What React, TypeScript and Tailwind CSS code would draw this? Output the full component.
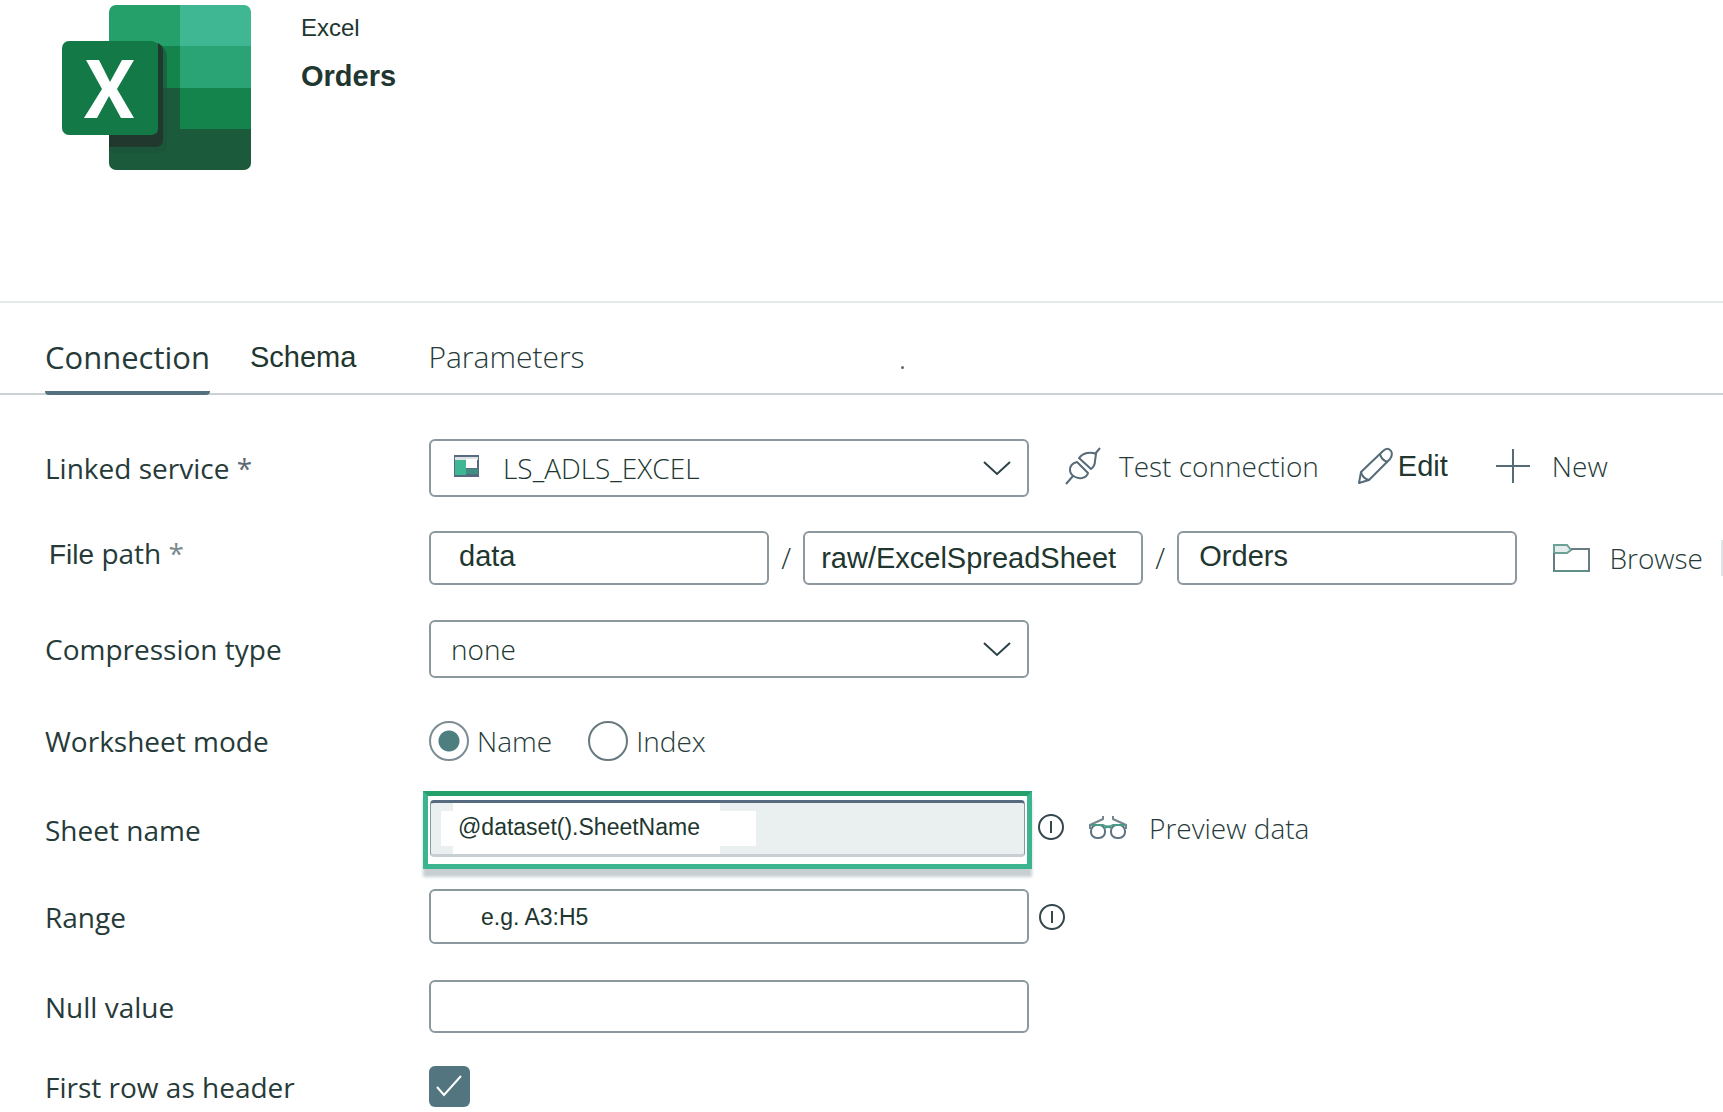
import type { ReactNode } from "react";

const arial = "font-['Liberation_Sans',sans-serif]";
const box = "w-full rounded-md border-2 border-[#8b989d] bg-white text-[#20362f] outline-none";

function ExcelLogo() {
  return (
    <svg width="190" height="166" viewBox="0 0 190 166" aria-label="Excel" role="img">
      <defs>
        <clipPath id="sheet">
          <rect x="47" y="0" width="142" height="165" rx="7" />
        </clipPath>
      </defs>
      <g clipPath="url(#sheet)">
        <rect x="47" y="0" width="71" height="42" fill="#25a06b" />
        <rect x="118" y="0" width="72" height="42" fill="#3fb793" />
        <rect x="47" y="41" width="71" height="42" fill="#14834c" />
        <rect x="118" y="41" width="72" height="42" fill="#2aa474" />
        <rect x="47" y="83" width="71" height="42" fill="#1c5a3c" />
        <rect x="118" y="83" width="72" height="42" fill="#14834c" />
        <rect x="47" y="124" width="143" height="42" fill="#1c5a3c" />
        <path d="M92 37q13 3 13 17v82q0 12-10 12H47v-4z" fill="#1b5138" opacity="0.6" />
        <path d="M47 129h46q3 0 3-6V38q5 3 5 8v88q0 8-8 8H47z" fill="#21382f" />
      </g>
      <rect x="0" y="36" width="96" height="94" rx="7" fill="#137a47" />
      <path d="M24 55h13l11 22 12-22h12L55 84l17 29H59L47 91 35 113H22l18-29z" fill="#fff" />
    </svg>
  );
}

function Chevron() {
  return (
    <svg className="pointer-events-none absolute right-[18px] top-1/2 -translate-y-1/2" width="28" height="16" viewBox="0 0 28 16" fill="none" stroke="#2b4046" strokeWidth="2">
      <path d="M1 2l13 12L27 2" />
    </svg>
  );
}

function PlugIcon() {
  return (
    <svg width="36" height="38" viewBox="0 0 36 38" fill="none" stroke="#566b78" strokeWidth="2" strokeLinejoin="round">
      <path d="M1 37l7-8M30 7l5-6" />
      <path d="M12 15l11 11q-1 4-6 5c-6 1-12-3-12-8 0-4 3-7 7-8z" />
      <path d="M14 11l12 11q4-3 4-8l1-7q-4-2-9-1-5 1-8 5z" />
    </svg>
  );
}

function PencilIcon() {
  return (
    <svg width="36" height="38" viewBox="0 0 36 38" fill="none" stroke="#566b78" strokeWidth="2" strokeLinejoin="round">
      <path d="M2 36l2-11L26 4c3-3 6-3 8 0s1 5-1 8L12 33z" />
      <path d="M23 7c1 5 4 7 8 8M4 25c1 5 4 7 8 8" />
    </svg>
  );
}

function PlusIcon() {
  return (
    <svg width="34" height="36" viewBox="0 0 34 36" fill="none" stroke="#566b78" strokeWidth="2">
      <path d="M17 1v34M0 18h34" />
    </svg>
  );
}

function FolderIcon() {
  return (
    <svg width="38" height="30" viewBox="0 0 38 30" fill="none" strokeWidth="2">
      <path d="M1 2h13l4 5-4 3H1z" fill="#e6ecec" stroke="#6aa296" />
      <path d="M1 10v18h35V6H18" stroke="#6a7c83" />
      <path d="M1 28h35" stroke="#5f8d88" />
    </svg>
  );
}

function GlassesIcon() {
  return (
    <svg width="38" height="24" viewBox="0 0 38 24" fill="none" stroke="#5f7384" strokeWidth="2">
      <rect x="2" y="9" width="14" height="13" rx="6" />
      <rect x="22" y="9" width="14" height="13" rx="6" />
      <path d="M1 13V9l13-6V0M37 13V9L24 3V0" stroke="#75868c" />
      <path d="M2 9h12q5 3 10 0h12M15 12q4-2 8 0" stroke="#4a9b86" />
    </svg>
  );
}

function InfoButton({ label }: { label: string }) {
  return (
    <button type="button" aria-label={label} className="ml-[9px] shrink-0">
      <svg width="28" height="28" viewBox="0 0 28 28" fill="none" stroke="#33474d" strokeWidth="2">
        <circle cx="14" cy="14" r="12" />
        <path d="M14 8v12" />
      </svg>
    </button>
  );
}

function Row({ label, htmlFor, className, children }: { label: ReactNode; htmlFor?: string; className: string; children: ReactNode }) {
  return (
    <div className={`flex items-center ${className}`}>
      <label htmlFor={htmlFor} className="w-[384px] shrink-0 whitespace-nowrap">{label}</label>
      {children}
    </div>
  );
}

export default function App() {
  return (
    <main className="overflow-hidden bg-white font-['Open_Sans',sans-serif] text-[28px] leading-9 text-[#263b39]">
      <header className={`flex gap-[49px] border-b-2 border-[#e4eaea] pt-[5px] pb-[130px] pl-[62px] ${arial} text-[#20362f]`}>
        <ExcelLogo />
        <div className="pt-[5px]">
          <p className="text-2xl leading-9">Excel</p>
          <h1 className="mt-3 text-[29px] leading-9 font-bold">Orders</h1>
        </div>
      </header>

      <nav className="flex items-end border-b-2 border-[#cbd2d6] pt-[34px] pl-[45px]">
        <button type="button" className="-mb-0.5 rounded-b-sm border-b-4 border-[#55707f] pb-3.5 text-[31px] leading-10">Connection</button>
        <button type="button" className={`ml-10 pb-4 text-[29px] leading-10 text-[#20362f] ${arial}`}>Schema</button>
        <button type="button" className="ml-[72px] pb-4 text-[30px] leading-10 font-light">Parameters</button>
        <span className="mb-6 ml-[316px] size-[3px] rounded-full bg-[#5c6b72]" />
      </nav>

      <form className="pl-[45px]">
        <Row className="mt-11" htmlFor="linked" label={<>Linked service <span className="text-[#5c6b72]">*</span></>}>
          <div className="relative w-[600px]">
            <select id="linked" className={`${box} h-[58px] appearance-none pl-[72px] font-light`}>
              <option>LS_ADLS_EXCEL</option>
            </select>
            <svg className="pointer-events-none absolute left-[25px] top-4" width="25" height="22" viewBox="0 0 25 22">
              <rect width="25" height="22" fill="#566b80" />
              <rect x="1" y="2" width="23" height="3" fill="#dde3e5" />
              <rect x="1" y="5" width="11" height="15" fill="#3fb793" />
              <rect x="12" y="4" width="11" height="9" fill="#fff" />
              <rect x="12" y="14" width="12" height="5" fill="#3f8f83" />
            </svg>
            <Chevron />
          </div>
          <div className="flex items-center pb-1">
            <button type="button" className="ml-9 flex items-center gap-[18px] whitespace-nowrap"><PlugIcon /><span className="font-light">Test connection</span></button>
            <button type="button" className={`ml-[38px] flex items-center gap-[5px] text-[29px] text-[#20362f] ${arial}`}><PencilIcon />Edit</button>
            <button type="button" className="ml-12 flex items-center gap-[22px] font-light"><PlusIcon />New</button>
          </div>
        </Row>

        <Row className="mt-[34px]" htmlFor="container" label={<span className="block pb-2 pl-1"><span className={arial}>File</span> path <span className="text-[#7c898e]">*</span></span>}>
          <div className={`grid min-w-0 flex-1 grid-cols-[minmax(0,1fr)_34px_minmax(0,1fr)_34px_minmax(0,1fr)] items-center text-[29px] ${arial}`}>
            <input id="container" defaultValue="data" className={`${box} h-[54px] pb-1 pl-7`} />
            <span className="text-center font-['Open_Sans',sans-serif] font-light">/</span>
            <input aria-label="Directory" defaultValue="raw/ExcelSpreadSheet" className={`${box} h-[54px] pl-4`} />
            <span className="text-center font-['Open_Sans',sans-serif] font-light">/</span>
            <input aria-label="File name" defaultValue="Orders" className={`${box} h-[54px] pb-1 pl-5`} />
          </div>
          <button type="button" className="ml-9 flex shrink-0 items-center gap-[18px] font-light"><FolderIcon />Browse</button>
          <span className="ml-[18px] h-9 w-0.5 bg-[#dfe5e7]" />
        </Row>

        <Row className="mt-[35px]" htmlFor="compression" label="Compression type">
          <div className="relative w-[600px]">
            <select id="compression" className={`${box} h-[58px] appearance-none pl-5 font-light`}>
              <option>none</option>
            </select>
            <Chevron />
          </div>
        </Row>

        <Row className="mt-[43px] h-10" label="Worksheet mode">
          <label className="flex items-center gap-2 font-light">
            <input type="radio" name="mode" defaultChecked className="size-10 appearance-none rounded-full border-2 border-[#7b8d93] checked:bg-[radial-gradient(circle,#4d7f80_10px,transparent_11px)]" />
            Name
          </label>
          <label className="ml-9 flex items-center gap-2 font-light">
            <input type="radio" name="mode" className="size-10 appearance-none rounded-full border-2 border-[#66797f]" />
            Index
          </label>
        </Row>

        <Row className="mt-[30px]" htmlFor="sheet-name" label="Sheet name">
          <div className="-ml-1.5 w-[609px] border-[5px] border-[#3cb58e] border-t-[#25a06b] px-0.5 pt-1 pb-[7px] shadow-[0_8px_3px_#c8cfd3]">
            <input
              id="sheet-name"
              defaultValue="@dataset().SheetName"
              className={`h-[57px] w-full rounded-sm border border-t-[3px] border-b-[3px] border-[#8b989d] border-t-[#566b80] border-b-[#c8cfd3] bg-[#eaeff0] bg-[linear-gradient(#fff,#fff),linear-gradient(#fff,#fff)] bg-[size:267px_100%,315px_35px] bg-[position:22px_0,10px_8px] bg-no-repeat pl-[27px] pb-0.5 text-[23px] text-[#20362f] outline-none ${arial}`}
            />
          </div>
          <div className="-ml-1"><InfoButton label="Sheet name help" /></div>
          <button type="button" className="ml-6 flex items-center gap-[22px] pb-1 font-light"><GlassesIcon />Preview data</button>
        </Row>

        <Row className="mt-5" htmlFor="range" label="Range">
          <div className="w-[600px]">
            <input id="range" placeholder="e.g. A3:H5" className={`${box} h-[55px] pt-0.5 pl-[50px] text-[23px] placeholder:text-[#20362f] ${arial}`} />
          </div>
          <InfoButton label="Range help" />
        </Row>

        <Row className="mt-9" htmlFor="null-value" label="Null value">
          <div className="w-[600px]">
            <input id="null-value" className={`${box} h-[53px] px-5`} />
          </div>
        </Row>

        <Row className="mt-[33px]" htmlFor="header-row" label="First row as header">
          <span className="relative size-[41px]">
            <input id="header-row" type="checkbox" defaultChecked className="block size-[41px] appearance-none rounded-md bg-[#527580]" />
            <svg className="pointer-events-none absolute inset-0" width="41" height="41" viewBox="0 0 41 41" fill="none" stroke="#fff" strokeWidth="2">
              <path d="M8 21l7 8 17-19" />
            </svg>
          </span>
        </Row>
      </form>
    </main>
  );
}
